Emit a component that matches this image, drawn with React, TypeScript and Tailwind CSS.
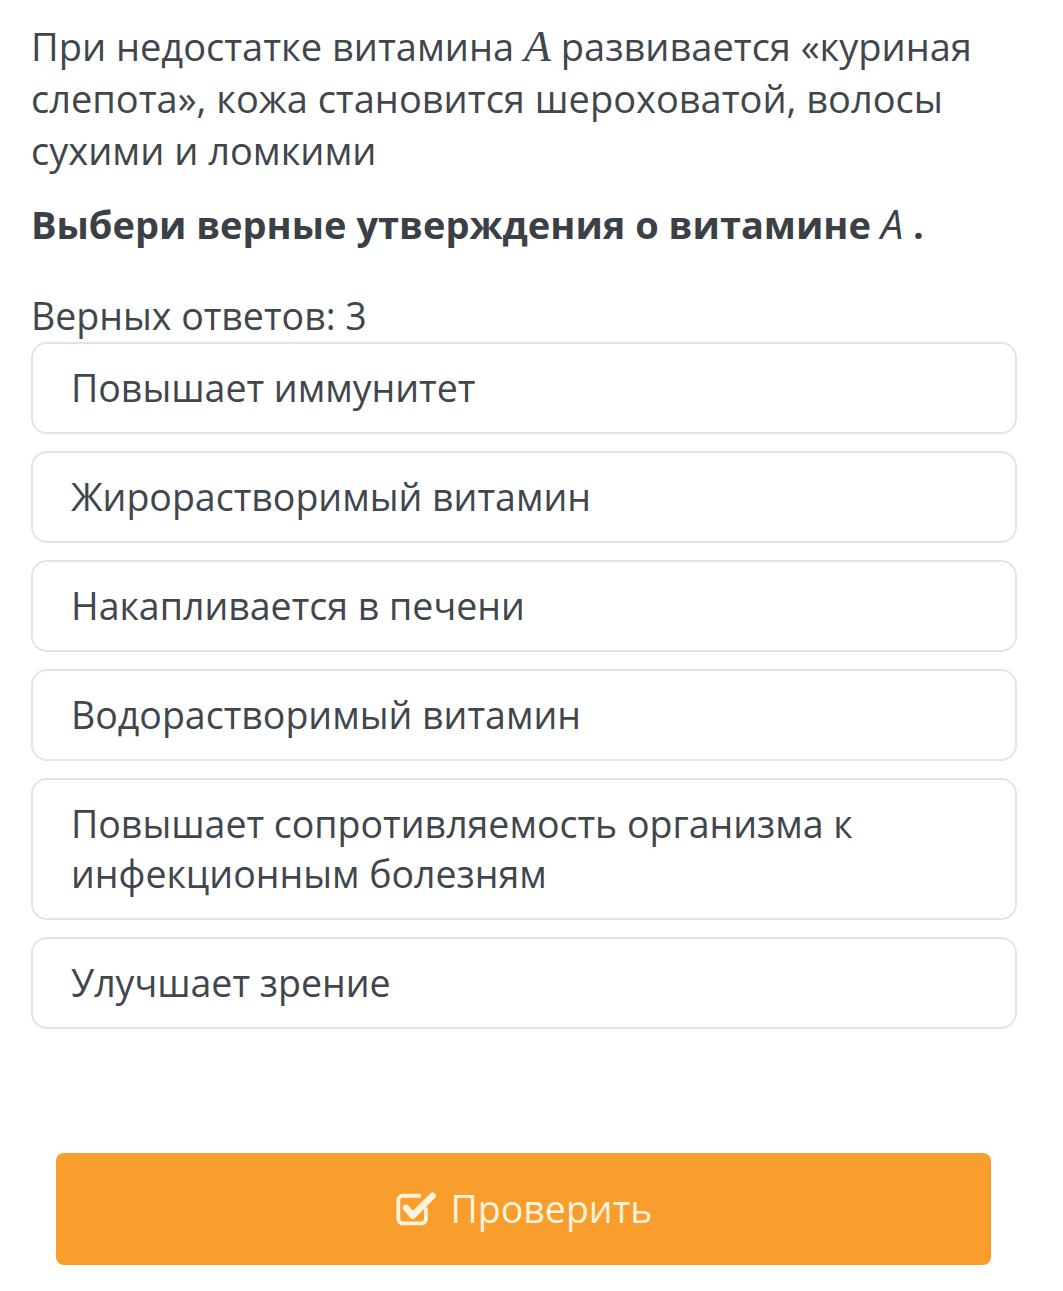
import { Fragment } from 'react';

const options = [
  'Повышает иммунитет',
  'Жирорастворимый витамин',
  'Накапливается в печени',
  'Водорастворимый витамин',
  'Повышает сопротивляемость организма к инфекционным болезням',
  'Улучшает зрение',
];

function CheckSquare() {
  return (
    <svg width="42" height="38" viewBox="0 0 38 34" fill="none" className="shrink-0">
      <path
        d="M28 17v9a4 4 0 0 1-4 4H7a4 4 0 0 1-4-4V9a4 4 0 0 1 4-4h15"
        stroke="#fff3dc"
        strokeWidth="3.5"
        strokeLinecap="round"
      />
      <path
        d="M10 16l6 7L34 5"
        stroke="#fff3dc"
        strokeWidth="6"
        strokeLinecap="round"
        strokeLinejoin="round"
      />
    </svg>
  );
}

export default function App() {
  return (
    <div className="min-h-[1291px] w-[1063px] bg-white text-[#41464d]" style={{ fontFamily: '"Open Sans", "Noto Sans", sans-serif' }}>
      <div className="pl-[31px] pr-[40px] pt-[20px]">
        <p className="text-[38px] leading-[52px]">
          При недостатке витамина{' '}
          <span className="italic text-[44px] leading-none" style={{ fontFamily: '"Liberation Serif", serif' }}>A</span>{' '}
          развивается «куриная слепота», кожа становится шероховатой, волосы сухими и ломкими
        </p>
        <p className="mt-[22px] text-[38px] leading-[52px] font-bold text-[#3b4047]">
          Выбери верные утверждения о витамине{' '}
          <span className="italic font-normal text-[40px] leading-none">A</span>
          {' '}.
        </p>
        <p className="mt-[40px] text-[37.5px] leading-[52px]">Верных ответов: 3</p>
        <div className="flex w-[986px] flex-col gap-[17px]">
          {options.map((o) => (
            <Fragment key={o}>
              <div className="rounded-[16px] border-2 border-[#e4e4e4] bg-white pl-[38px] pr-[40px] py-[19px] text-[37.5px] leading-[50px]">
                {o}
              </div>
            </Fragment>
          ))}
        </div>
      </div>
      <div className="pl-[56px] pt-[124px]">
        <button className="flex h-[112px] w-[935px] items-center justify-center gap-[14px] rounded-[8px] bg-[#f99d2c] text-[37.5px] text-[#fff3dc]">
          <CheckSquare />
          <span>Проверить</span>
        </button>
      </div>
    </div>
  );
}
